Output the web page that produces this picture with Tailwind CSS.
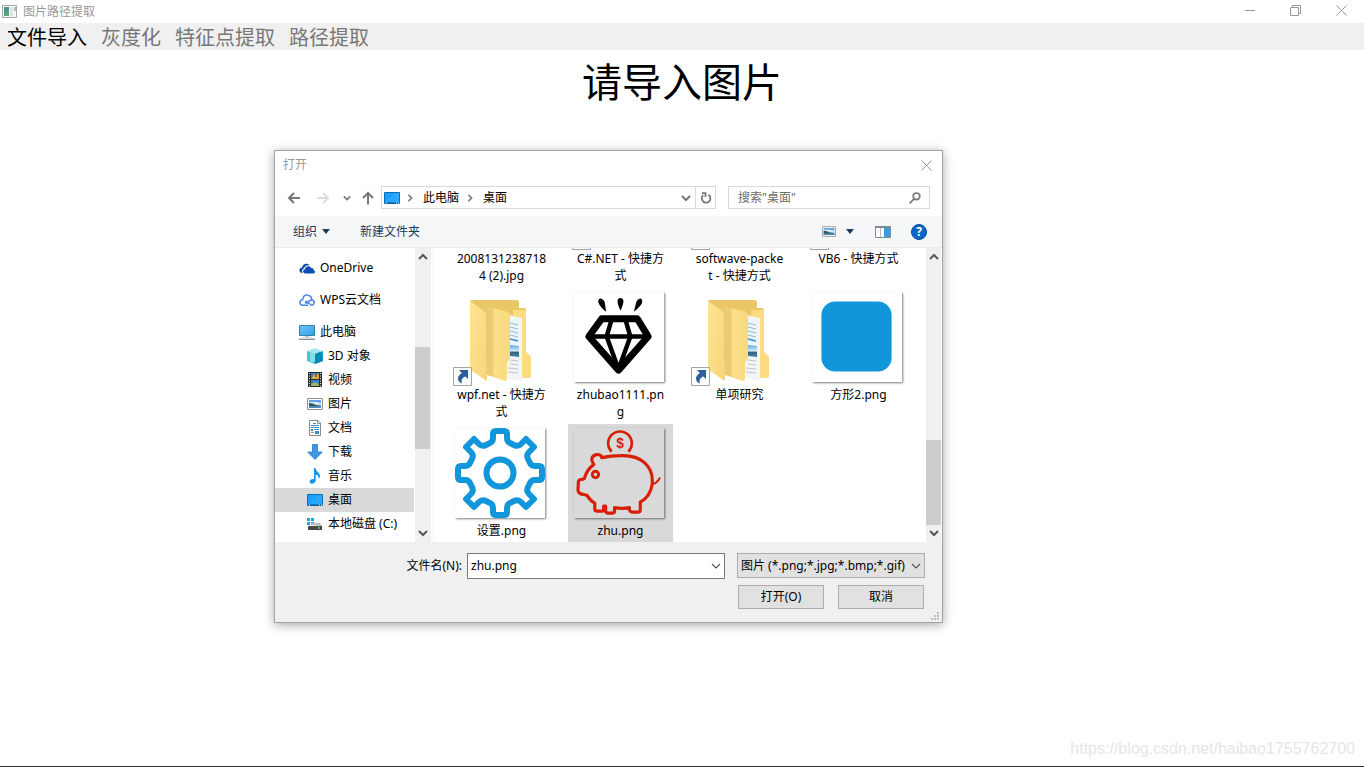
<!doctype html>
<html lang="zh-CN">
<head>
  <meta charset="UTF-8">
  <meta name="viewport" content="width=device-width, initial-scale=1.0">
  <title>图片路径提取</title>
  <script src="https://cdn.jsdelivr.net/npm/@tailwindcss/browser@4"></script>
</head>
<body class="relative flex min-h-screen flex-col overflow-hidden border-b border-[#333] bg-white font-['Noto_Sans','Noto_Sans_CJK_SC',sans-serif] text-xs text-black">

  <!-- shared shapes -->
  <svg class="absolute size-0" aria-hidden="true">
    <defs>
      <linearGradient id="front" x1="0" y1="0" x2="1" y2="1">
        <stop offset="0" stop-color="#ffe493"/><stop offset="1" stop-color="#f6d67a"/>
      </linearGradient>
      <linearGradient id="middle" x1="0" y1="0" x2="1" y2="0">
        <stop offset="0" stop-color="#e6c468"/><stop offset=".45" stop-color="#eecf74"/><stop offset=".5" stop-color="#fde08b"/><stop offset="1" stop-color="#f8d97f"/>
      </linearGradient>
      <linearGradient id="sky" x1="0" y1="0" x2="0" y2="1">
        <stop offset="0" stop-color="#5aa9e6"/><stop offset=".5" stop-color="#d5ecf8"/><stop offset=".6" stop-color="#35627c"/><stop offset="1" stop-color="#3f86a8"/>
      </linearGradient>
      <linearGradient id="screen" x1="0" y1="0" x2="1" y2="1">
        <stop offset="0" stop-color="#6cc5fa"/><stop offset="1" stop-color="#2f9fe8"/>
      </linearGradient>
    </defs>
    <symbol id="folder" viewBox="0 0 91 91">
      <path d="M15 9Q15 8 17 8H61Q64 8 64 10V16H69Q71 16 71 19V60L76 65V83Q76 86 73 86H52L15 60Z" fill="#e9c766"/>
      <path d="M58 18H69Q71 18 71 20V60L76 65V83Q76 86 73 86H60Z" fill="#fbdc80"/>
      <path d="M54 23L67 26V89L51 86Z" fill="#f2f4f6"/>
      <path d="M55 31L63 33M55 35L63 37M55 39L63 41M55 43L63 45" stroke="#7cc0e8"/>
      <path d="M55 47L63 49" stroke="#2f93d0" stroke-width="1.5"/>
      <path d="M55 53L64 54V65L55 64Z" fill="url(#sky)"/>
      <path d="M55 68L63 69M55 72L63 73M53 76L63 77M53 80L63 81" stroke="#c3c6ca"/>
      <path d="M24 12L53 20Q55 21 55 23V66L52 71V87Q52 89 50 89L32 83Z" fill="url(#middle)"/>
      <path d="M15 9L29 19Q31 21 31 24V68L32 71V87Q32 90 30 88L16 78Q15 77 15 75Z" fill="url(#front)"/>
    </symbol>
    <symbol id="shortcut" viewBox="0 0 19 19">
      <path d="M.5 .5H18.500V18.500H.5Z" fill="#fbfbfb" stroke="#a5a5a5"/>
      <path d="M6 3H15V12L12.300 9.500C9 11 8 13 9 16.500C4.500 15 3 9.500 8.800 6Z" fill="#2d5f9f"/>
    </symbol>
    <symbol id="picture" viewBox="0 0 16 12">
      <path d="M.5 .5H15.500V11.500H.5Z" fill="#fff" stroke="#929292"/>
      <path d="M2 2H14V10H2Z" fill="#5f9fe4"/>
      <path d="M2 4Q8 3 14 5V7H2Z" fill="#d3e8f5"/>
      <path d="M2 5Q6 5 9 7L14 8V9H2Z" fill="#2f5a50"/>
      <path d="M2 8H14V10H2Z" fill="#5286b5"/>
    </symbol>
    <symbol id="desktop" viewBox="0 0 16 12">
      <path d="M.5 .5H15.500V11.500H.5Z" fill="#18a0fb" stroke="#0d6fae"/>
      <path d="M1 11L11 1H15V10Z" fill="#2aa7ff"/>
      <path d="M1 11H15" stroke="#0a5685"/>
      <path d="M2 11H3M12 11H13M14 11H15" stroke="#fff"/>
    </symbol>
    <symbol id="down" viewBox="0 0 10 10"><path d="M1 3L5 7L9 3" fill="none" stroke="currentColor" stroke-width="2"/></symbol>
    <symbol id="thin-down" viewBox="0 0 10 10"><path d="M1 3L5 7L9 3" fill="none" stroke="currentColor" stroke-width="1.2"/></symbol>
    <symbol id="cross" viewBox="0 0 11 11"><path d="M.5 .5L10.500 10.500M10.500 .5L.5 10.500" fill="none" stroke="currentColor"/></symbol>
  </svg>

  <header class="flex h-[23px] items-center">
    <svg class="ml-0.5 size-4" viewBox="0 0 16 16">
      <path d="M.5 1.500H14.500V13.500H.5Z" fill="#f7f7f7" stroke="#a6a6a6"/>
      <path d="M2 3H7V12H2Z" fill="#4f8d99"/><path d="M2 9L7 6V12H2Z" fill="#5fa67f"/>
      <path d="M8 3H11V12H8Z" fill="#e1e4e6"/><path d="M12 3H14V7H12Z" fill="#9cc9bc"/>
    </svg>
    <h1 class="ml-[5px] text-[#999]">图片路径提取</h1>
    <div class="ml-auto flex h-full items-center pb-0.5 text-[#999]">
      <button class="flex w-[46px] justify-center" aria-label="最小化">
        <svg class="size-[11px]" viewBox="0 0 11 11"><path d="M1 5.500H11" stroke="currentColor"/></svg>
      </button>
      <button class="flex w-[46px] justify-center" aria-label="还原">
        <svg class="size-[11px]" viewBox="0 0 11 11" fill="none" stroke="currentColor"><path d="M.5 2.500H8.500V10.500H.5ZM2.500 2.500V.5H10.500V8.500H8.500"/></svg>
      </button>
      <button class="flex w-[46px] justify-center" aria-label="关闭"><svg class="size-[11px]"><use href="#cross"/></svg></button>
    </div>
  </header>

  <nav class="flex h-[27px] items-center bg-[#f0f0f0] pt-0.5 text-xl text-[#777]">
    <button class="px-[7px] text-black">文件导入</button>
    <button class="px-[7px]">灰度化</button>
    <button class="px-[7px]">特征点提取</button>
    <button class="px-[7px]">路径提取</button>
  </nav>

  <main class="grow pt-2">
    <h2 class="text-center text-[40px] leading-[48px]">请导入图片</h2>
  </main>

  <p class="self-end pr-[9px] pb-[7px] font-['Liberation_Sans',sans-serif] text-base leading-5 text-[#e6e6e6]">https://blog.csdn.net/haibao1755762700</p>

  <!-- file dialog -->
  <section role="dialog" aria-label="打开" class="absolute top-[150px] left-[274px] w-[669px] border border-[#a3a3a3] bg-white shadow-[0_2px_10px_rgba(0,0,0,0.35)]">
    <div class="flex h-7 items-center justify-between pr-2.5 pl-2 text-[#999]">
      <h3 class="leading-7">打开</h3>
      <button aria-label="关闭"><svg class="size-[11px]"><use href="#cross"/></svg></button>
    </div>

    <div class="flex h-[37px] items-center px-3 text-[#777]">
      <button class="mr-[15px]" aria-label="后退">
        <svg class="size-3.5" viewBox="0 0 14 14" fill="none" stroke="currentColor" stroke-width="2"><path d="M13 7H2M7 2L2 7L7 12"/></svg>
      </button>
      <button class="mr-[13px] text-[#ddd]" aria-label="前进">
        <svg class="size-3.5" viewBox="0 0 14 14" fill="none" stroke="currentColor" stroke-width="2"><path d="M1 7H12M7 2L12 7L7 12"/></svg>
      </button>
      <button class="mr-2.5" aria-label="最近位置"><svg class="size-2"><use href="#down"/></svg></button>
      <button class="mr-1.5" aria-label="上移">
        <svg class="size-3.5" viewBox="0 0 14 14" fill="none" stroke="currentColor" stroke-width="2"><path d="M7 13.500V2M2 7L7 2L12 7"/></svg>
      </button>
      <div class="flex h-[23px] grow items-center border border-[#d9d9d9]">
        <svg class="mx-0.5 h-3 w-4"><use href="#desktop"/></svg>
        <svg class="mr-1.5 ml-1 size-2 -rotate-90"><use href="#down"/></svg>
        <a href="#" class="mx-[3px] text-black">此电脑</a>
        <svg class="mr-1.5 ml-1 size-2 -rotate-90"><use href="#down"/></svg>
        <a href="#" class="mx-[3px] text-black">桌面</a>
        <button class="mr-1 ml-auto" aria-label="以前的位置"><svg class="size-2.5"><use href="#down"/></svg></button>
        <button class="flex h-full w-5 items-center justify-center border-l border-[#d9d9d9]" aria-label="刷新">
          <svg class="size-3" viewBox="0 0 12 12" fill="none" stroke="currentColor" stroke-width="1.800"><path d="M8.500 2.800A4.300 4.300 0 1 1 3.200 3.200M2 1.200H5.500V5"/></svg>
        </button>
      </div>
      <label class="ml-3 flex h-[23px] w-[202px] items-center border border-[#d9d9d9] pr-2 pl-[9px]">
        <input type="search" aria-label="搜索" placeholder='搜索"桌面"' class="min-w-0 grow outline-none placeholder:text-[#6d6d6d]">
        <svg class="size-3 shrink-0" viewBox="0 0 12 12" fill="none" stroke="currentColor" stroke-width="1.700"><circle cx="7.500" cy="4.300" r="3.300"/><path d="M5.200 6.700L.6 11.300"/></svg>
      </label>
    </div>

    <div class="flex h-8 items-center border-b border-[#e8eaec] bg-[#f5f6f7] pr-[15px] pl-[18px] text-[#1e395b]">
      <button class="flex items-center gap-[5px]">组织
        <svg class="h-[5px] w-2" viewBox="0 0 8 5"><path d="M0 0H8L4 5Z" fill="currentColor"/></svg>
      </button>
      <button class="ml-[30px]">新建文件夹</button>
      <button class="mr-2.5 ml-auto" aria-label="视图"><svg class="h-[11px] w-3.5"><use href="#picture"/></svg></button>
      <button class="mr-[21px]" aria-label="更多选项"><svg class="h-[5px] w-2" viewBox="0 0 8 5"><path d="M0 0H8L4 5Z" fill="currentColor"/></svg></button>
      <button class="mr-5" aria-label="预览窗格">
        <svg class="h-3 w-4" viewBox="0 0 16 12"><path d="M.5 .5H15.500V11.500H.5Z" fill="#fff" stroke="#828a90"/><path d="M0 0H16V2H0Z" fill="#828a90"/><path d="M5.500 2V11" stroke="#b7bcc0"/><path d="M9 2H15V11H9Z" fill="#3d9ae0"/></svg>
      </button>
      <button class="flex size-4 items-center justify-center rounded-full border border-[#044a94] bg-[#0a68c8] text-xs leading-none font-bold text-white" aria-label="帮助">?</button>
    </div>

    <div class="flex h-[294px]">
      <ul class="flex w-[139px] shrink-0 flex-col pt-2">
        <li class="mb-2 flex h-6 items-center gap-[5px] pl-6">
          <svg class="size-4" viewBox="0 0 16 16" fill="#0f4cb3"><path d="M1 12C-.5 10 .8 7.500 3 7.500C3.500 4 7.800 2.500 10.500 5.300C7.500 5 5.500 6.500 5 8.500C3 9 2.700 11 3.500 13C2 13 1.500 12.500 1 12Z"/><path d="M5.800 13.500C3.500 13 3.500 9.500 6 9.300C6.300 6 11 5 12.400 8.300C14 8 15 9 14.700 10.200C16.800 10.800 16 13.500 14.500 13.500Z"/></svg>
          <a href="#">OneDrive</a>
        </li>
        <li class="mb-2 flex h-6 items-center gap-[5px] pl-6">
          <svg class="size-4" viewBox="0 0 16 16" fill="none" stroke="#4c86ee" stroke-width="1.500"><path d="M9 13.200H4C0 13 0 8 3.800 7.500C4.500 1.200 12.800 2 12.800 8C16.200 8.500 16 13 12.300 13.200L8 9.500C6.500 9 5.800 11 7.500 11.200C9.500 11.200 9 8 12.800 8"/></svg>
          <a href="#">WPS云文档</a>
        </li>
        <li class="flex h-6 items-center gap-[5px] pl-6">
          <svg class="size-4" viewBox="0 0 16 16"><path d="M.5 1.500H15.500V11.500H.5Z" fill="url(#screen)" stroke="#3382ab"/><path d="M6 12H10V13H6Z" fill="#bcc8cf"/><path d="M3 13.500H13" stroke="#d4dadf"/><path d="M0 15.300H16" stroke="#7b8e9a" stroke-width="1.300"/></svg>
          <a href="#">此电脑</a>
        </li>
        <li class="flex h-6 items-center gap-[5px] pl-8">
          <svg class="size-4" viewBox="0 0 16 16"><path d="M0 3L8 0L16 3L8 6Z" fill="#a4e7ee"/><path d="M0 3L8 6V16L0 13Z" fill="#48c3d5"/><path d="M8 6L16 3V13L8 16Z" fill="#109dbc"/><path d="M3 4L8 6V13L3 15Z" fill="#81dce7"/><path d="M8 6L13 4L16 10V13L8 16Z" fill="#078aae"/></svg>
          <a href="#">3D 对象</a>
        </li>
        <li class="flex h-6 items-center gap-[5px] pl-8">
          <svg class="size-4" viewBox="0 0 16 16"><path d="M1 0H15V15H1Z" fill="#2d2d2d"/><path d="M4 1H12V7H4ZM4 8H12V14H4Z" fill="#367ed0"/><path d="M5 6L7 2L9 4L11 1L12 4V7H4Z" fill="#d7b545"/><path d="M8 2H10V5H8Z" fill="#b24a35"/><path d="M4 12L8 10L12 12V14H4Z" fill="#98b765"/><path d="M2.500 1V15M13.500 1V15" stroke="#eee" stroke-dasharray="1 1.500"/></svg>
          <a href="#">视频</a>
        </li>
        <li class="flex h-6 items-center gap-[5px] pl-8">
          <svg class="h-3 w-4"><use href="#picture"/></svg>
          <a href="#">图片</a>
        </li>
        <li class="flex h-6 items-center gap-[5px] pl-8">
          <svg class="size-4" viewBox="0 0 16 16"><path d="M2.500 .5H11L13.500 3V15.500H2.500Z" fill="#fff" stroke="#8b8b8b"/><path d="M10.500 .5V3.500H13.500" fill="none" stroke="#8b8b8b"/><path d="M6 3.500H9M4 5.500H12M4 7.500H12M7 9.500H12" stroke="#3695cd"/><path d="M4 9H6V11H4ZM8 11H12V14H8Z" fill="#3a8cba"/><path d="M4 12.500H7" stroke="#999"/></svg>
          <a href="#">文档</a>
        </li>
        <li class="flex h-6 items-center gap-[5px] pl-8">
          <svg class="size-4" viewBox="0 0 16 16"><path d="M5.500 .5H10.500V8H15.300L8 15.500L.7 8H5.500Z" fill="#3f96e4" stroke="#2879c2" stroke-width=".8"/></svg>
          <a href="#">下载</a>
        </li>
        <li class="flex h-6 items-center gap-[5px] pl-8">
          <svg class="size-4" viewBox="0 0 16 16"><path d="M7 0H8.500C9 4 13.500 4.500 13 9L11.500 11C12 8 10.500 7 8.700 6.500V12.500C8.500 15.500 3.500 17 2.700 14C2.500 11.800 5 10.700 7 11.200Z" fill="#0e96ef"/></svg>
          <a href="#">音乐</a>
        </li>
        <li class="flex h-6 items-center gap-[5px] bg-[#d9d9d9] pl-8">
          <svg class="h-3 w-4"><use href="#desktop"/></svg>
          <a href="#" aria-current="page">桌面</a>
        </li>
        <li class="flex h-6 items-center gap-[5px] pl-8">
          <svg class="size-4" viewBox="0 0 16 16"><path d="M0 2H3V5H0ZM4 2H7V5H4ZM0 6H3V9H0ZM4 6H7V9H4Z" fill="#08aee8"/><path d="M3 9L5 7H13L15 10Z" fill="#b9bcc0"/><path d="M1 10H15V14H1Z" fill="#45484a"/><path d="M11 12H13" stroke="#55dd55" stroke-width="1.500"/></svg>
          <a href="#">本地磁盘 (C:)</a>
        </li>
      </ul>

      <div class="ml-px flex w-4 shrink-0 flex-col items-center bg-[#f0f0f0] pr-px text-[#555]">
        <svg class="my-1 size-2.5 rotate-180"><use href="#down"/></svg>
        <div class="mt-[81px] h-[102px] w-full bg-[#cdcdcd]"></div>
        <svg class="mt-auto mb-1 size-2.5"><use href="#down"/></svg>
      </div>

      <div class="ml-0.5 grow overflow-hidden border-l border-[#f3f3f3] pl-[15px]">
        <!-- list scrolled down by 96px -->
        <ul class="-mt-24 grid grid-cols-[repeat(4,105px)] gap-x-3.5 text-center leading-[17px]">
          <li class="h-[136px] pt-1">
            <div class="mb-0.5 h-[92px]"></div>
            2008131238718<br>4 (2).jpg
          </li>
          <li class="h-[136px] pt-1">
            <div class="relative mb-0.5 h-[92px]"><svg class="absolute -bottom-0.5 left-1 size-[19px]"><use href="#shortcut"/></svg></div>
            C#.NET - 快捷方<br>式
          </li>
          <li class="h-[136px] pt-1">
            <div class="relative mb-0.5 h-[92px]"><svg class="absolute -bottom-0.5 left-1 size-[19px]"><use href="#shortcut"/></svg></div>
            softwave-packe<br>t - 快捷方式
          </li>
          <li class="h-[136px] pt-1">
            <div class="relative mb-0.5 h-[92px]"><svg class="absolute -bottom-0.5 left-1 size-[19px]"><use href="#shortcut"/></svg></div>
            VB6 - 快捷方式
          </li>

          <li class="h-[136px] pt-1">
            <div class="relative mb-0.5 h-[92px] pl-1.5">
              <svg class="size-[91px]"><use href="#folder"/></svg>
              <svg class="absolute -bottom-0.5 left-1 size-[19px]"><use href="#shortcut"/></svg>
            </div>
            wpf.net - 快捷方<br>式
          </li>
          <li class="h-[136px] pt-1">
            <div class="mb-0.5 h-[92px] pl-1.5">
              <svg class="size-[90px] bg-white shadow-[1px_1px_2px_rgba(0,0,0,0.5)]" viewBox="0 0 91 91" fill="none" stroke="#000" stroke-linejoin="round">
                <path d="M28 27H64L75 45L45 79L15 45Z" stroke-width="7"/>
                <path d="M15 45H75M38 28L33 45L45 78L57 45L52 28" stroke-width="4.500"/>
                <path d="M24.500 10C24.500 5 29 6 31 10L32.500 20C29 17 25.500 14 24.500 10ZM44 9C44 5 50 5 50 9C50 13 48 16 47 19C46 16 44 13 44 9ZM69 10C69 5 65 6 63 10L60.500 20C64 17 68 14 69 10Z" fill="#000" stroke="none"/>
              </svg>
            </div>
            zhubao1111.pn<br>g
          </li>
          <li class="h-[136px] pt-1">
            <div class="relative mb-0.5 h-[92px] pl-1.5">
              <svg class="size-[91px]"><use href="#folder"/></svg>
              <svg class="absolute -bottom-0.5 left-1 size-[19px]"><use href="#shortcut"/></svg>
            </div>
            单项研究
          </li>
          <li class="h-[136px] pt-1">
            <div class="mb-0.5 h-[92px] pl-1.5">
              <svg class="size-[90px] bg-white shadow-[1px_1px_2px_rgba(0,0,0,0.5)]" viewBox="0 0 91 91"><rect x="9.500" y="9.500" width="71" height="71" rx="14" fill="#1296db"/></svg>
            </div>
            方形2.png
          </li>

          <li class="h-[136px] pt-1">
            <div class="mb-0.5 h-[92px] pl-1.5">
              <svg class="size-[90px] bg-white shadow-[1px_1px_2px_rgba(0,0,0,0.5)]" viewBox="0 0 90 90" fill="none" stroke="#1296db" stroke-width="6" stroke-linejoin="round">
                <path d="M41 3Q38 3 38 6V10Q38 14 34 15.500L31 17Q27 19 24 16L19 11L11 19L16 24Q19 27 17 31L15.500 34Q14 38 10 38H6Q3 38 3 41V49Q3 52 6 52H10Q14 52 15.500 56L17 59Q19 63 16 66L11 71L19 79L24 74Q27 71 31 73L34 74.500Q38 76 38 80V84Q38 87 41 87H49Q52 87 52 84V80Q52 76 56 74.500L59 73Q63 71 66 74L71 79L79 71L74 66Q71 63 73 59L74.500 56Q76 52 80 52H84Q87 52 87 49V41Q87 38 84 38H80Q76 38 74.500 34L73 31Q71 27 74 24L79 19L71 11L66 16Q63 19 59 17L56 15.500Q52 14 52 10V6Q52 3 49 3Z"/>
                <circle cx="45" cy="45" r="13.500"/>
              </svg>
            </div>
            设置.png
          </li>
          <li class="h-[136px] bg-[#d9d9d9] pt-1">
            <div class="mb-0.5 h-[92px] pl-1.5">
              <svg class="size-[90px] bg-[#d9d9d9] shadow-[1px_1px_2px_rgba(0,0,0,0.5)]" viewBox="0 0 91 91" fill="none" stroke="#d81e06" stroke-width="2.600" stroke-linejoin="round">
                <path d="M38 24A12 12 0 1 1 55 24"/>
                <text x="46.500" y="20.500" text-anchor="middle" fill="#d81e06" stroke="none" class="font-['Liberation_Sans',sans-serif] text-sm font-bold">$</text>
                <path d="M28 30C28 25 18 26 18 32C18 34 20 36 20 37C14 41 12 45 10.500 51C8 53 5 51 4.500 54L4 63C4 67 9 67 13 68C15 71 17 74 21 76V82Q21 84 23 84H29Q30 84 30 82V79H32V83Q32 86 34 86H39Q41 86 41 84V80.500Q49 82 56 80.500V83Q57 85 59 85H65Q67 85 67 83V75C74 71 78 65 79 57C81 38 67 27 47 28C40 28 33 29 28 30Z" stroke-width="3.200"/>
                <circle cx="21.700" cy="47" r="3.200" stroke-width="3"/>
                <path d="M79 57Q84 56 87 50" stroke-width="2"/>
              </svg>
            </div>
            zhu.png
          </li>
        </ul>
      </div>

      <div class="mr-px flex w-[15px] shrink-0 flex-col items-center bg-[#f0f0f0] text-[#555]">
        <svg class="my-1 size-2.5 rotate-180"><use href="#down"/></svg>
        <div class="mt-[174px] h-[85px] w-full bg-[#cdcdcd]"></div>
        <svg class="mt-auto mb-1 size-2.5"><use href="#down"/></svg>
      </div>
    </div>

    <form class="relative flex h-20 flex-col gap-1.5 bg-[#f0f0f0] pt-[11px]">
      <div class="flex justify-end pr-[17px]">
        <label for="filename" class="mr-[5px] leading-[26px]">文件名(N):</label>
        <div class="flex h-[26px] w-[258px] items-center border border-[#7a7a7a] bg-white pr-[3px] pl-[3px]">
          <input id="filename" type="text" value="zhu.png" class="min-w-0 grow outline-none">
          <button type="button" class="text-[#555]" aria-label="显示列表"><svg class="size-2.5"><use href="#thin-down"/></svg></button>
        </div>
        <div class="relative ml-3">
          <select aria-label="文件类型" class="h-[25px] w-[188px] appearance-none border border-[#adadad] bg-[#e1e1e1] pl-[3px]">
            <option>图片 (*.png;*.jpg;*.bmp;*.gif)</option>
          </select>
          <svg class="pointer-events-none absolute top-2 right-1 size-2.5 text-[#555]"><use href="#thin-down"/></svg>
        </div>
      </div>
      <div class="flex justify-end gap-3.5 pr-[18px]">
        <button type="button" class="h-6 w-[86px] border border-[#adadad] bg-[#e1e1e1]">打开(O)</button>
        <button type="button" class="h-6 w-[86px] border border-[#adadad] bg-[#e1e1e1]">取消</button>
      </div>
      <svg class="absolute right-[3px] bottom-0.5 size-2" viewBox="0 0 8 8" fill="#bfbfbf"><path d="M6 0H8V2H6ZM3 3H5V5H3ZM6 3H8V5H6ZM0 6H2V8H0ZM3 6H5V8H3ZM6 6H8V8H6Z"/></svg>
    </form>
  </section>
</body>
</html>
